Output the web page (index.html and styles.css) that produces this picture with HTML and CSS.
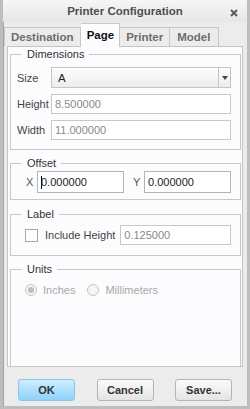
FILE: index.html
```html
<!DOCTYPE html>
<html lang="en">
<head>
  <meta charset="UTF-8" />
  <title>Printer Configuration</title>
  <link rel="stylesheet" href="styles.css">
</head>
<body>
  <div class="window">
    <div class="titlebar">
      <span class="title">Printer Configuration</span>
      <svg class="close" width="8" height="8" viewBox="0 0 8 8"><path d="M1 1L7 7M7 1L1 7" stroke="#5a5a5a" stroke-width="2"/></svg>
    </div>

    <div class="tabs">
      <div class="tab">Destination</div>
      <div class="tab active">Page</div>
      <div class="tab">Printer</div>
      <div class="tab wide">Model</div>
    </div>

    <div class="panel">
      <fieldset class="group dims">
        <legend>Dimensions</legend>
        <div class="row">
          <label class="lbl">Size</label>
          <div class="select"><span class="val">A</span><span class="arrow"></span></div>
        </div>
        <div class="row">
          <label class="lbl">Height</label>
          <div class="field off">8.500000</div>
        </div>
        <div class="row">
          <label class="lbl">Width</label>
          <div class="field off">11.000000</div>
        </div>
      </fieldset>

      <fieldset class="group offset">
        <legend>Offset</legend>
        <div class="row">
          <label class="lbl-s">X</label>
          <div class="field fx"><span class="caret"></span>0.000000</div>
          <label class="lbl-s ly">Y</label>
          <div class="field">0.000000</div>
        </div>
      </fieldset>

      <fieldset class="group label">
        <legend>Label</legend>
        <div class="row">
          <span class="check"></span>
          <label class="lbl-c">Include Height</label>
          <div class="field off">0.125000</div>
        </div>
      </fieldset>

      <fieldset class="group units">
        <legend>Units</legend>
        <div class="row dim">
          <span class="radio on"></span><label>Inches</label>
          <span class="radio second"></span><label>Millimeters</label>
        </div>
      </fieldset>
    </div>

    <div class="buttons">
      <button class="btn primary">OK</button>
      <button class="btn">Cancel</button>
      <button class="btn">Save...</button>
    </div>
  </div>
</body>
</html>
```

FILE: styles.css
```css
body { margin: 0; font-family: "Liberation Sans", Arial, sans-serif; font-size: 11px; color: #333; }
.window { width: 250px; height: 409px; box-sizing: border-box; border: 3px solid #bdbdbd; border-top: none; box-shadow: inset 1px 0 #a4a4a4; background: #ececec; display: flex; flex-direction: column; }

.titlebar { height: 22px; flex: none; display: flex; align-items: center; justify-content: center; position: relative; background: linear-gradient(#f6f6f6, #e6e6e6); }
.title { font-weight: bold; font-size: 11.5px; color: #4e4e4e; }
.close { position: absolute; right: 9px; top: 9px; }

.tabs { display: flex; padding-left: 1px; height: 24px; flex: none; box-sizing: border-box; align-items: flex-end; }
.tab { height: 19px; box-sizing: border-box; border: 1px solid #c8c8c8; border-bottom: none; border-left: none; padding: 0 6px; font-weight: bold; font-size: 11.5px; color: #6c6c6c; line-height: 18px; background: #ececec; }
.tab:first-child { border-left: 1px solid #c8c8c8; }
.tab.wide { padding: 0 8px 0 7px; }
.tab.active { background: #fcfcfe; color: #111; height: 24px; line-height: 22px; margin-bottom: -1px; position: relative; z-index: 1; padding: 0 5px 0 6px; }

.panel { margin: 0 4px; background: #fcfcfe; border: 1px solid #c4c4c4; padding: 1px 1px 0 2px; flex: 1; display: flex; flex-direction: column; gap: 7px; }

.group { border: 1px solid #c8c8c8; margin: 0; padding: 0 9px 0 6px; }
.group legend { padding: 0 5px; margin-left: 5px; line-height: 13px; color: #333; }
.row { display: flex; align-items: center; }
.dims { padding-top: 6px; padding-bottom: 9px; }
.dims .row + .row { margin-top: 6px; }
.lbl { width: 34px; color: #444; }
.offset { padding-top: 1px; padding-bottom: 6px; }
.lbl-s { width: 11px; margin-left: 9px; color: #555; }
.fx { flex: none; width: 89px; }
.ly { margin-left: 9px; }
.label { margin-top: 1px; padding-top: 4px; padding-bottom: 10px; }
.lbl-c { margin: 0 5px 0 7px; color: #444; }

.select { flex: 1; height: 21px; box-sizing: border-box; border: 1px solid #c4c4c4; background: linear-gradient(#fdfdfd, #ececec); display: flex; align-items: center; padding-left: 6px; color: #222; font-size: 11.5px; }
.select .val { flex: 1; }
.arrow { width: 11px; height: 19px; border-left: 1px solid #c4c4c4; display: flex; align-items: center; justify-content: center; }
.arrow::after { content: ""; border-left: 3px solid transparent; border-right: 3px solid transparent; border-top: 4px solid #444; }

.field { flex: 1; height: 20px; box-sizing: border-box; border: 1px solid #c8c8c8; background: #fff; display: flex; align-items: center; padding-left: 3px; color: #222; }
.field.off { color: #8a8a8a; }
.offset .field { height: 22px; border-color: #b4b4b4; }
.caret { width: 1px; height: 13px; background: #000; margin-right: -1px; }

.check { width: 11px; height: 11px; border: 1px solid #a8a8a8; background: #fdfdfd; margin-left: 8px; flex: none; }

.units { flex: 1; padding-top: 8px; padding-bottom: 0; margin-bottom: -1px; }
.dim { color: #a8a8a8; }
.radio { width: 10px; height: 10px; border-radius: 50%; border: 1px solid #c4c4c4; background: #f6f6f6; margin: 0 6px 0 8px; display: flex; align-items: center; justify-content: center; }
.radio.on::after { content: ""; width: 6px; height: 6px; border-radius: 50%; background: #bdbdbd; }
.radio.second { margin-left: 12px; }

.buttons { height: 39px; flex: none; box-sizing: border-box; display: flex; align-items: flex-start; justify-content: space-between; padding: 12px 15px 0 15px; }
.btn { width: 57px; height: 22px; border: 1px solid #b4b4b4; border-radius: 3px; background: linear-gradient(#fbfbfb, #e4e4e4); font-family: inherit; font-weight: bold; font-size: 11px; color: #333; padding: 0; }
.btn.primary { background: linear-gradient(#cdeefe, #8fd1fa); border-color: #8dc5e6; }
```
